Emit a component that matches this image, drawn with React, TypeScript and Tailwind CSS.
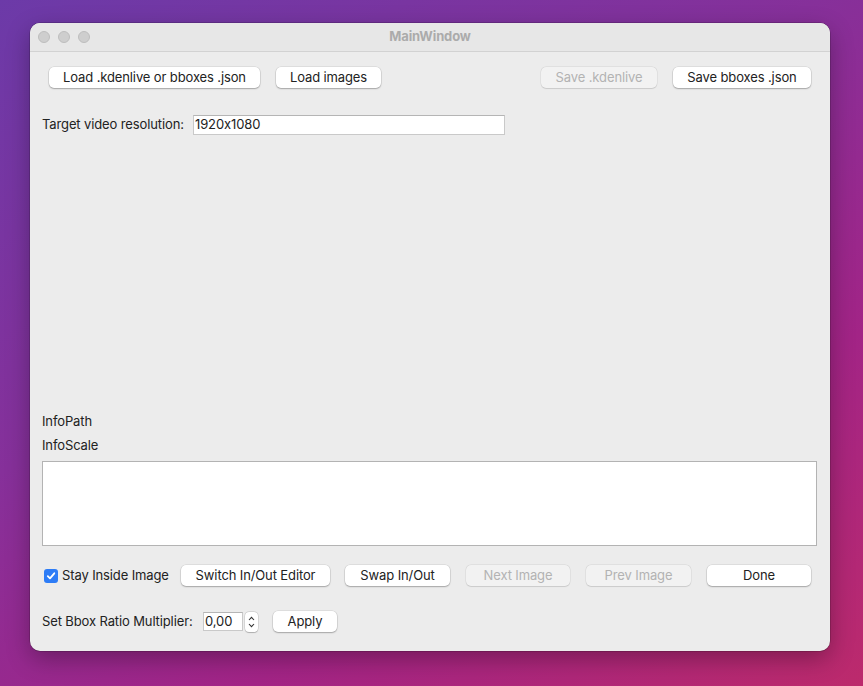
import React from "react";

function Btn({ children, w, disabled }: { children: React.ReactNode; w: string; disabled?: boolean }) {
  return (
    <div
      className={
        "h-[21px] rounded-[5px] flex items-center justify-center text-[13px] leading-none " +
        w +
        (disabled
          ? " bg-[#f2f2f2] text-[#b3b3b3] shadow-[0_0_0_0.5px_rgba(0,0,0,0.08),0_0.5px_1px_rgba(0,0,0,0.1)]"
          : " bg-white text-[#222] shadow-[0_0_0_0.5px_rgba(0,0,0,0.12),0_1px_1.5px_rgba(0,0,0,0.25)]")
      }
    >
      {children}
    </div>
  );
}

export default function App() {
  return (
    <div
      className="w-[863px] h-[686px] overflow-hidden pl-[30px] pt-[23px] tracking-[-0.12px] [font-feature-settings:'calt'_0] bg-[linear-gradient(150deg,#6c3aa8_0%,#86309a_40%,#a22486_70%,#bc2a6c_100%)]"
      style={{ fontFamily: "Inter, 'Noto Sans', sans-serif" }}
    >
      <div className="w-[800px] h-[628px] rounded-[10px] bg-[#ececec] shadow-[0_0_0_0.5px_rgba(0,0,0,0.3),0_8px_24px_rgba(0,0,0,0.3)] flex flex-col overflow-hidden">
        {/* title bar */}
        <div className="h-[29px] bg-[#e7e7e7] border-b border-[#d2d2d2] flex items-center relative shrink-0">
          <div className="flex gap-[8px] pl-[8px]">
            <div className="w-[12px] h-[12px] rounded-full bg-[#cecece] border border-[#bdbdbd]" />
            <div className="w-[12px] h-[12px] rounded-full bg-[#cecece] border border-[#bdbdbd]" />
            <div className="w-[12px] h-[12px] rounded-full bg-[#cecece] border border-[#bdbdbd]" />
          </div>
          <div className="absolute inset-0 flex items-center justify-center text-[13px] font-bold text-[#ababab]">
            MainWindow
          </div>
        </div>

        {/* top buttons */}
        <div className="flex items-center mt-[15px] px-[19px]">
          <Btn w="w-[211px]">Load .kdenlive or bboxes .json</Btn>
          <div className="w-[16px]" />
          <Btn w="w-[105px]">Load images</Btn>
          <div className="flex-1" />
          <Btn w="w-[116px]" disabled>
            Save .kdenlive
          </Btn>
          <div className="w-[16px]" />
          <Btn w="w-[138px]">Save bboxes .json</Btn>
        </div>

        {/* resolution */}
        <div className="flex items-center mt-[27px] pl-[12px]">
          <div className="text-[13px] text-[#222] w-[151px]">Target video resolution:</div>
          <div className="w-[312px] h-[20px] bg-white border border-[#c9c9c9] border-t-[#b5b5b5] flex items-center pl-[1px] text-[13px] text-[#222]">
            1920x1080
          </div>
        </div>

        {/* spacer */}
        <div className="h-[278px]" />

        <div className="pl-[12px] text-[13px] text-[#222] leading-[16px]">InfoPath</div>
        <div className="pl-[12px] text-[13px] text-[#222] leading-[16px] mt-[8px]">InfoScale</div>

        <div className="mx-[12px] mr-[13px] mt-[8px] h-[85px] bg-white border border-[#b3b3b3]" />

        {/* bottom row */}
        <div className="flex items-center mt-[19px] pl-[14px]">
          <div className="w-[14px] h-[14px] rounded-[3px] bg-[#2d7cf6] flex items-center justify-center">
            <svg width="10" height="10" viewBox="0 0 10 10">
              <path d="M1.8 5.2 L4 7.4 L8.3 2.3" fill="none" stroke="white" strokeWidth="1.8" strokeLinecap="round" strokeLinejoin="round" />
            </svg>
          </div>
          <div className="text-[13px] text-[#222] ml-[4px] w-[119px]">Stay Inside Image</div>
          <Btn w="w-[149px]">Switch In/Out Editor</Btn>
          <div className="w-[15px]" />
          <Btn w="w-[105px]">Swap In/Out</Btn>
          <div className="w-[16px]" />
          <Btn w="w-[104px]" disabled>
            Next Image
          </Btn>
          <div className="w-[16px]" />
          <Btn w="w-[105px]" disabled>
            Prev Image
          </Btn>
          <div className="w-[16px]" />
          <Btn w="w-[104px]">Done</Btn>
        </div>

        {/* spin row */}
        <div className="flex items-center mt-[25px] pl-[12px]">
          <div className="text-[13px] text-[#222] w-[161px]">Set Bbox Ratio Multiplier:</div>
          <div className="w-[40px] h-[19px] bg-white border border-[#c9c9c9] border-t-[#b5b5b5] flex items-center pl-[1px] text-[13px] text-[#222]">
            0,00
          </div>
          <div className="ml-[2px] w-[13px] h-[20px] rounded-[4px] bg-white shadow-[0_0_0_0.5px_rgba(0,0,0,0.15),0_0.5px_1px_rgba(0,0,0,0.2)] flex flex-col items-center justify-center gap-[2px]">
            <svg width="7" height="5" viewBox="0 0 7 5">
              <path d="M1 4 L3.5 1.3 L6 4" fill="none" stroke="#333" strokeWidth="1.1" />
            </svg>
            <svg width="7" height="5" viewBox="0 0 7 5">
              <path d="M1 1 L3.5 3.7 L6 1" fill="none" stroke="#333" strokeWidth="1.1" />
            </svg>
          </div>
          <div className="w-[15px]" />
          <Btn w="w-[64px]">Apply</Btn>
        </div>
      </div>
    </div>
  );
}
